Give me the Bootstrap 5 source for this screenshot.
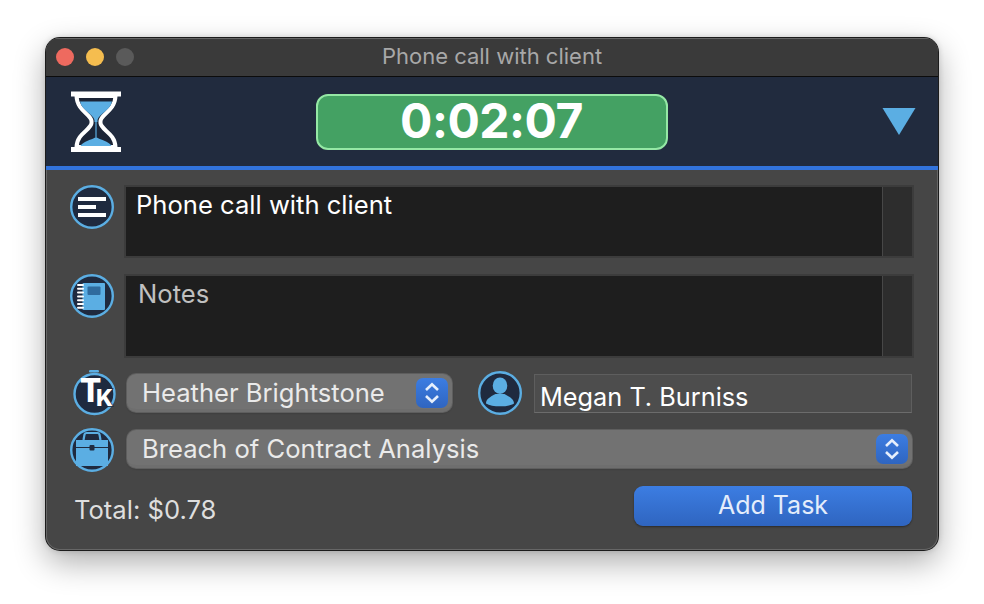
<!DOCTYPE html>
<html lang="en">
  <head>
    <meta charset="UTF-8" />
    <meta name="viewport" content="width=device-width, initial-scale=1.0" />
    <title>Phone call with client</title>
    <link
      rel="stylesheet"
      href="https://cdn.jsdelivr.net/npm/bootstrap@5.3.0/dist/css/bootstrap.min.css"
    />
    <style>
      html,
      body {
        height: 604px;
        overflow: hidden;
      }
      body {
        background-color: #fff;
        font-family: Inter, "Liberation Sans", sans-serif;
      }
      .app-window {
        width: 892px;
        height: 512px;
        margin: 38px 0 0 46px;
        background-color: #464646;
        border-radius: 14px;
        box-shadow: 0 0 0 1px #1c1c1c, inset 0 0 0 1px #666,
          0 12px 32px rgba(0, 0, 0, 0.33), 0 0 6px rgba(0, 0, 0, 0.2);
        overflow: hidden;
      }
      .title-bar {
        height: 39px;
        padding: 0 10px 2px;
        background-color: #3a3a3a;
        border-top: 1px solid #666;
        border-bottom: 1px solid #0c0c0c;
        position: relative;
      }
      .title-text {
        font-size: 22px;
        color: #a8a8a8;
      }
      .traffic {
        gap: 12px;
        position: absolute;
        left: 10px;
        top: 9px;
      }
      .traffic span {
        width: 18px;
        height: 18px;
        border-radius: 50%;
      }
      .header-band {
        display: grid;
        grid-template-columns: 1fr auto 1fr;
        align-items: center;
        height: 93px;
        padding: 0 22px 0 25px;
        background-color: #212b3e;
        border-bottom: 4px solid #3273dc;
      }
      .timer-box {
        width: 352px;
        height: 56px;
        margin-left: -4px;
        background-color: #44a163;
        border: 2px solid #95e8a5;
        border-radius: 12px;
        color: #fff;
        font-size: 48px;
        font-weight: 700;
        line-height: 50px;
        letter-spacing: -0.5px;
      }
      .content-area {
        padding: 15px 24px 0 24px;
      }
      .icon-disc {
        flex: 0 0 auto;
      }
      .field-box {
        flex: 1 1 auto;
        background-color: #1e1e1e;
        border: 2px solid #3c3c3c;
      }
      .field-box textarea {
        flex: 1 1 auto;
        background: transparent;
        border: 0;
        border-radius: 0;
        box-shadow: none;
        resize: none;
        overflow: hidden;
        font-size: 25.6px;
        line-height: 30px;
      }
      .field-box textarea:focus {
        background: transparent;
        box-shadow: none;
      }
      .scroll-gutter {
        flex: 0 0 30px;
        background-color: #2d2d2d;
        border-left: 1px solid #474747;
      }
      .task-row {
        height: 73px;
        gap: 10px;
      }
      .task-input {
        padding: 3px 10px;
        color: #fff;
      }
      .notes-row {
        height: 84px;
        margin-top: 16px;
        gap: 10px;
      }
      .notes-input {
        padding: 3px 12px;
        color: #fff;
      }
      .notes-input::placeholder {
        color: #c0c0c0;
        opacity: 1;
      }
      .people-row {
        height: 40px;
        margin-top: 15px;
      }
      .matter-row {
        height: 40px;
        margin-top: 16px;
      }
      .popup-wrap {
        position: relative;
      }
      .popup-select {
        width: 100%;
        height: 38px;
        padding: 0 40px 0 15px;
        appearance: none;
        background-color: #727272;
        border: 0;
        border-bottom: 3px solid #6e6e6e;
        border-radius: 9px;
        box-shadow: 0 0 0 1px #5e5e5e, 0 1px 2px rgba(0, 0, 0, 0.3);
        color: #eaeaea;
        font-size: 25.6px;
      }
      .stepper-btn {
        position: absolute;
        right: 4px;
        top: 4px;
        width: 32px;
        height: 30px;
        background: linear-gradient(#3c7de2, #2f65c0);
        border-radius: 7px;
      }
      .keeper-wrap {
        width: 325px;
        margin-left: 11px;
      }
      .matter-wrap {
        flex: 1 1 auto;
        margin: 0 2px 0 13px;
      }
      .person-disc {
        margin-left: 26px;
      }
      .case-disc {
        margin-top: 2px;
      }
      .client-field {
        width: 378px;
        height: 39px;
        margin-left: 12px;
        padding: 7px 5px 0;
        background-color: #4d4d4d;
        border: 1px solid #5e5e5e;
        border-bottom-color: #6c6c6c;
        border-radius: 0;
        box-shadow: none;
        color: #fff;
        font-size: 25.3px;
        line-height: 30px;
      }
      .footer-row {
        margin-top: 17px;
        padding-left: 4px;
      }
      .total-text {
        color: #dedede;
        font-size: 25.6px;
        line-height: 30px;
        padding-top: 8px;
      }
      .add-btn {
        width: 278px;
        height: 40px;
        padding: 0;
        margin-right: 2px;
        background: linear-gradient(#3c7de2, #2f65c0);
        border: 0;
        border-radius: 9px;
        box-shadow: 0 1px 2px rgba(0, 0, 0, 0.4);
        color: #e4edfb;
        font-size: 25px;
      }
    </style>
  </head>
  <body>
    <div class="app-window">
      <div class="title-bar d-flex align-items-center justify-content-center">
        <div class="traffic d-flex">
          <span style="background-color: #ee6a5f"></span>
          <span style="background-color: #f5bd4f"></span>
          <span style="background-color: #5a5a5a"></span>
        </div>
        <span class="title-text">Phone call with client</span>
      </div>

      <div class="header-band">
        <svg width="50" height="62" viewBox="0 0 50 62">
          <path d="M5.5 5C6 20 20 23 20.5 30V32C20 39 6 42 5.5 56H44.5C44 42 30 39 29.5 32V30C30 23 44 20 44.5 5Z" fill="#1b2436" stroke="#fff" stroke-width="4" />
          <path d="M9 10.5H41C39.5 19 28 23 26.5 29V31H23.5V29C22 23 10.5 19 9 10.5Z" fill="#5baee3" />
          <path d="M24.4 30H25.6V46H24.4Z" fill="#5baee3" />
          <path d="M9.5 55C12 50 21 49 25 46C29 49 38 50 40.5 55Z" fill="#5baee3" />
          <rect x="0" y="0.5" width="50" height="5" fill="#fff" />
          <rect x="0" y="56" width="50" height="5" fill="#fff" />
        </svg>
        <div class="timer-box text-center">0:02:07</div>
        <svg class="ms-auto" width="34" height="29" viewBox="0 0 34 29">
          <path d="M0.5 1H33.5L17 28Z" fill="#5baee3" />
        </svg>
      </div>

      <div class="content-area">
        <div class="task-row d-flex">
          <svg class="icon-disc" width="44" height="44" viewBox="0 0 44 44">
            <circle cx="22" cy="22" r="20.8" fill="#1f2a3f" stroke="#5baee3" stroke-width="2.4" />
            <path d="M8 12H36V16H8ZM8 20H26V24H8ZM8 28H36V32H8Z" fill="#fff" />
          </svg>
          <div class="field-box d-flex">
            <textarea class="form-control task-input" rows="2">Phone call with client</textarea>
            <div class="scroll-gutter"></div>
          </div>
        </div>

        <div class="notes-row d-flex">
          <svg class="icon-disc" width="44" height="44" viewBox="0 0 44 44">
            <circle cx="22" cy="22" r="20.8" fill="#1f2a3f" stroke="#5baee3" stroke-width="2.4" />
            <rect x="12.5" y="9" width="22.5" height="27" rx="1" fill="#5baee3" />
            <rect x="17.5" y="12.5" width="13" height="8.5" rx="1" fill="#2f6b9e" />
            <path d="M8 11H13M8 14.8H13M8 18.6H13M8 22.4H13M8 26.2H13M8 30H13M8 33.8H13" stroke="#fff" stroke-width="2" stroke-linecap="round" />
          </svg>
          <div class="field-box d-flex">
            <textarea class="form-control notes-input" rows="2" placeholder="Notes"></textarea>
            <div class="scroll-gutter"></div>
          </div>
        </div>

        <div class="people-row d-flex align-items-center">
          <svg class="icon-disc" width="46" height="46" viewBox="0 0 46 46">
            <rect x="19" y="0" width="10" height="2.4" rx="1.2" fill="#5baee3" />
            <circle cx="24.5" cy="24" r="20" fill="#1f2a3f" stroke="#5baee3" stroke-width="2.4" />
            <text x="20.5" y="31.7" text-anchor="middle" font-family="Inter" font-weight="800" font-size="32" fill="#fff">T</text>
            <text x="34.5" y="35.5" text-anchor="middle" font-family="Inter" font-weight="800" font-size="23" fill="#fff" stroke="#1f2a3f" stroke-width="1.5" paint-order="stroke">K</text>
          </svg>
          <div class="popup-wrap keeper-wrap">
            <select class="popup-select">
              <option>Heather Brightstone</option>
            </select>
            <div class="stepper-btn d-flex align-items-center justify-content-center">
              <svg width="16" height="24" viewBox="0 0 16 24">
                <path d="M2 9L8 3.2L14 9M2 15L8 20.8L14 15" fill="none" stroke="#e6effc" stroke-width="2.6" />
              </svg>
            </div>
          </div>
          <svg class="icon-disc person-disc" width="44" height="44" viewBox="0 0 44 44">
            <circle cx="22" cy="22" r="20.8" fill="#1f2a3f" stroke="#5baee3" stroke-width="2.4" />
            <ellipse cx="22" cy="14.7" rx="7.3" ry="8.3" fill="#5baee3" />
            <path d="M8 32.5C8 28 12 26 17.5 23H26.5C32 26 36 28 36 32.5C30 36.3 14 36.3 8 32.5Z" fill="#5baee3" />
          </svg>
          <input class="form-control client-field" type="text" value="Megan T. Burniss" />
        </div>

        <div class="matter-row d-flex align-items-center">
          <svg class="icon-disc case-disc" width="44" height="44" viewBox="0 0 44 44">
            <circle cx="22" cy="22" r="20.8" fill="#1f2a3f" stroke="#5baee3" stroke-width="2.4" />
            <path d="M13.5 12L14.5 6.5C14.7 5.5 15.5 5 16.5 5H27.5C28.5 5 29.3 5.5 29.5 6.5L30.5 12" fill="none" stroke="#5baee3" stroke-width="2.2" />
            <path d="M6 12H38V19H6ZM6 20H38V38H6Z" fill="#5baee3" />
            <rect x="19.5" y="17" width="5" height="5.5" rx="1" fill="#1f2a3f" />
          </svg>
          <div class="popup-wrap matter-wrap">
            <select class="popup-select">
              <option>Breach of Contract Analysis</option>
            </select>
            <div class="stepper-btn d-flex align-items-center justify-content-center">
              <svg width="16" height="24" viewBox="0 0 16 24">
                <path d="M2 9L8 3.2L14 9M2 15L8 20.8L14 15" fill="none" stroke="#e6effc" stroke-width="2.6" />
              </svg>
            </div>
          </div>
        </div>

        <div class="footer-row d-flex align-items-center justify-content-between">
          <span class="total-text">Total: $0.78</span>
          <button type="button" class="btn add-btn">Add Task</button>
        </div>
      </div>
    </div>
    <script src="https://cdn.jsdelivr.net/npm/bootstrap@5.3.0/dist/js/bootstrap.bundle.min.js"></script>
  </body>
</html>
